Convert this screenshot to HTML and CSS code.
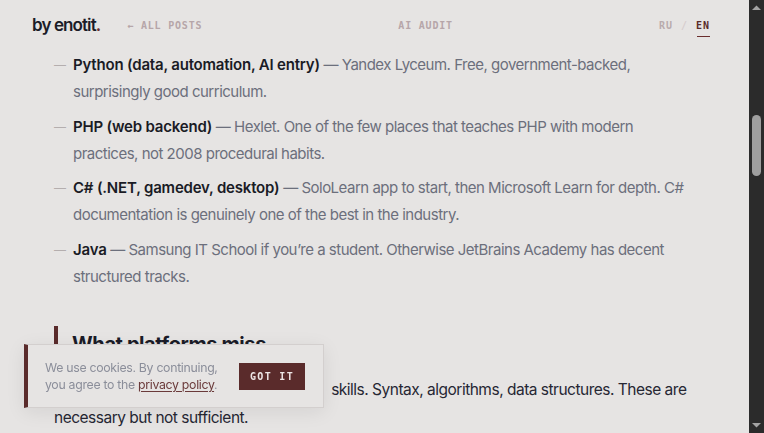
FILE: index.html
```
<!DOCTYPE html>
<html lang="en">
<head>
<meta charset="utf-8">
<title>by enotit. — Learning to code</title>
<link rel="stylesheet" href="styles.css">
</head>
<body>
<div class="page">
  <header class="topbar">
    <a class="logo" href="#">by enotit<span class="dot">.</span></a>
    <a class="navlink back" href="#">← ALL POSTS</a>
    <a class="navlink audit" href="#">AI AUDIT</a>
    <div class="lang">
      <span class="lang-item">RU</span>
      <span class="lang-sep">/</span>
      <span class="lang-item active">EN</span>
    </div>
  </header>
  <main class="content">
    <ul class="tracks">
      <li><span class="dash">—</span><p><b>Python (data, automation, AI entry)</b> — Yandex Lyceum. Free, government-backed, surprisingly good curriculum.</p></li>
      <li><span class="dash">—</span><p><b>PHP (web backend)</b> — Hexlet. One of the few places that teaches PHP with modern practices, not 2008 procedural habits.</p></li>
      <li><span class="dash">—</span><p><b>C# (.NET, gamedev, desktop)</b> — SoloLearn app to start, then Microsoft Learn for depth. C# documentation is genuinely one of the best in the industry.</p></li>
      <li><span class="dash">—</span><p><b>Java</b> — Samsung IT School if you’re a student. Otherwise JetBrains Academy has decent structured tracks.</p></li>
    </ul>
    <h2 class="section-title">What platforms miss</h2>
    <p class="body-text">Every platform above teaches technical&#8194;skills. Syntax, algorithms, data structures. These are necessary but not sufficient.</p>
  </main>
</div>
<div class="scrollbar" aria-hidden="true">
  <div class="sb-arrow"><svg width="15" height="15" viewBox="0 0 15 15"><path d="M3 10 L7.5 5.5 L12 10 Z" fill="#a3a3a3"/></svg></div>
  <div class="sb-track"><div class="sb-thumb"></div></div>
  <div class="sb-arrow"><svg width="15" height="15" viewBox="0 0 15 15"><path d="M3 5 L7.5 9.5 L12 5 Z" fill="#a3a3a3"/></svg></div>
</div>
<div class="cookie">
  <p class="cookie-text">We use cookies. By continuing, you agree to the <a href="#">privacy policy</a>.</p>
  <button class="cookie-btn">GOT IT</button>
</div>
</body>
</html>
```
FILE: styles.css
```
* { box-sizing: border-box; }
html, body { margin: 0; padding: 0; }
body {
  display: flex;
  height: 433px;
  overflow: hidden;
  background: #e6e4e3;
  font-family: Inter, "Noto Sans", sans-serif;
  color: #1b1c26;
}
a { color: inherit; text-decoration: none; }
.page {
  flex: 1;
  min-width: 0;
  display: flex;
  flex-direction: column;
  overflow: hidden;
}
.topbar {
  height: 51px;
  flex: none;
  display: flex;
  align-items: center;
  padding: 0 39px 0 32px;
}
.logo {
  font-size: 17px;
  font-weight: 600;
  letter-spacing: -0.9px;
  color: #1b1c28;
  margin-top: -2px;
}
.logo .dot { color: #6a2e2e; }
.navlink {
  font-family: "DejaVu Sans Mono", "Liberation Mono", monospace;
  font-size: 10px;
  letter-spacing: 0.8px;
  color: #b6a6a9;
  font-weight: 600;
}
.back { margin-left: 27px; }
.audit { margin-left: 196px; }
.lang {
  margin-left: auto;
  display: flex;
  gap: 8px;
  font-family: "DejaVu Sans Mono", "Liberation Mono", monospace;
  font-size: 10px;
  letter-spacing: 1px;
  font-weight: 600;
}
.lang-item { color: #b9abad; }
.lang-sep { color: #d6cdce; }
.lang-item.active {
  color: #5a2b2b;
  font-weight: 700;
  position: relative;
}
.lang-item.active::after {
  content: "";
  position: absolute;
  left: 1px;
  right: 0;
  bottom: -6px;
  height: 1.5px;
  background: #6a2e2e;
}
.content {
  padding: 0 54px 0 54px;
}
.tracks {
  list-style: none;
  margin: 0;
  padding: 0;
}
.tracks li {
  display: flex;
  margin-bottom: 7.5px;
}
.dash {
  width: 19px;
  flex: none;
  color: #b4aeae;
  font-size: 12px;
  line-height: 27px;
}
.tracks p {
  margin: 0;
  font-size: 15px;
  line-height: 27px;
  color: #6c6f7c;
  letter-spacing: -0.5px;
}
.tracks b {
  color: #1a1b25;
  font-weight: 600;
  letter-spacing: -0.2px;
}
.section-title {
  margin: 36px 0 0;
  border-left: 4px solid #5a2b2b;
  padding: 0 0 0 14px;
  font-size: 20px;
  line-height: 36px;
  font-weight: 700;
  letter-spacing: -0.4px;
  color: #1b1c28;
}
.body-text {
  margin: 14px 0 0;
  font-size: 15.5px;
  line-height: 28px;
  color: #262733;
  letter-spacing: -0.5px;
}
.scrollbar {
  width: 15px;
  flex: none;
  background: #2b2b2b;
  display: flex;
  flex-direction: column;
}
.sb-arrow { height: 15px; flex: none; }
.sb-arrow svg { display: block; }
.sb-track {
  flex: 1;
  padding: 100px 3px 0;
}
.sb-thumb {
  height: 61px;
  border-radius: 5px;
  background: #9f9f9f;
}
.cookie {
  position: fixed;
  left: 24px;
  bottom: 25px;
  width: 300px;
  height: 64px;
  display: flex;
  align-items: center;
  justify-content: space-between;
  padding: 0 18px 0 17px;
  background: #e6e4e3;
  border: 1px solid #d3cfce;
  border-left: 4px solid #5a2b2b;
  box-shadow: 0 4px 18px rgba(0,0,0,0.08);
}
.cookie-text {
  margin: 0;
  font-size: 12.3px;
  line-height: 17.5px;
  color: #8b8e9a;
  width: 180px;
  letter-spacing: -0.3px;
}
.cookie-text a {
  color: #6a3a3a;
  text-decoration: underline;
  text-underline-offset: 2px;
}
.cookie-btn {
  border: none;
  background: #5a2b2b;
  color: #eee6e6;
  font-family: "DejaVu Sans Mono", "Liberation Mono", monospace;
  font-weight: 700;
  font-size: 10px;
  letter-spacing: 1.3px;
  width: 66px;
  height: 27px;
  padding: 0;
}
```
